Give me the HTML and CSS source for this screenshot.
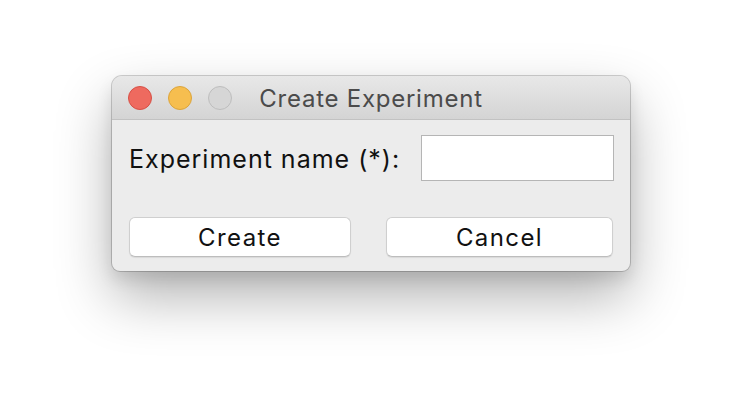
FILE: index.html
```html
<!DOCTYPE html>
<html>
<head>
<meta charset="utf-8">
<link rel="stylesheet" href="styles.css">
</head>
<body>
<div class="window">
  <div class="titlebar">
    <div class="lights">
      <span class="light red"></span>
      <span class="light yellow"></span>
      <span class="light gray"></span>
    </div>
    <div class="title">Create Experiment</div>
  </div>
  <div class="content">
    <div class="row">
      <label class="label">Experiment name (*):</label>
      <div class="input"></div>
    </div>
    <div class="buttons">
      <button class="btn btn-create">Create</button>
      <button class="btn btn-cancel">Cancel</button>
    </div>
  </div>
</div>
</body>
</html>
```
FILE: styles.css
```css
html, body {
  margin: 0;
  padding: 0;
  background: #ffffff;
}
body {
  width: 742px;
  height: 420px;
  overflow: hidden;
  font-family: "Inter", "Liberation Sans", sans-serif;
}
.window {
  width: 518px;
  margin: 76px 0 0 112px;
  border-radius: 10px 10px 8px 8px;
  background: #ececec;
  box-shadow: 0 0 0 1px rgba(0,0,0,0.18), 0 26px 56px rgba(0,0,0,0.30), 0 8px 16px rgba(0,0,0,0.10);
  overflow: hidden;
}
.titlebar {
  position: relative;
  height: 43px;
  background: linear-gradient(#e8e8e8, #d4d4d4);
  border-bottom: 1px solid #c2c2c2;
  display: flex;
  align-items: center;
  justify-content: center;
}
.lights {
  position: absolute;
  left: 16px;
  top: 10px;
  display: flex;
  gap: 16px;
}
.light {
  width: 22px;
  height: 22px;
  border-radius: 50%;
  display: block;
}
.red { background: #ee6a5f; border: 1px solid #d65046; }
.yellow { background: #f6be4f; border: 1px solid #dba43c; }
.gray { background: #d6d6d6; border: 1px solid #bdbdbd; }
.title {
  font-size: 24px;
  color: #4b4b4b;
  letter-spacing: 0.75px;
  margin-top: 1px;
}
.content {
  padding: 15px 16px 14px 17px;
}
.row {
  display: flex;
  align-items: center;
  justify-content: space-between;
}
.label {
  font-size: 25px;
  color: #111;
  letter-spacing: 1px;
  margin-top: 2px;
}
.input {
  width: 191px;
  height: 44px;
  background: #fff;
  border: 1px solid #b5b5b5;
}
.buttons {
  display: flex;
  justify-content: space-between;
  margin-top: 36px;
  padding-right: 1px;
}
.btn {
  height: 40px;
  background: #fff;
  border: 1px solid #cfcfcf;
  border-bottom-color: #bdbdbd;
  border-radius: 6px;
  box-shadow: 0 1px 1px rgba(0,0,0,0.08);
  font-family: "Inter", "Liberation Sans", sans-serif;
  font-size: 24px;
  color: #111;
  letter-spacing: 1.4px;
  padding: 0;
}
.btn-create { width: 222px; }
.btn-cancel { width: 227px; }
```
